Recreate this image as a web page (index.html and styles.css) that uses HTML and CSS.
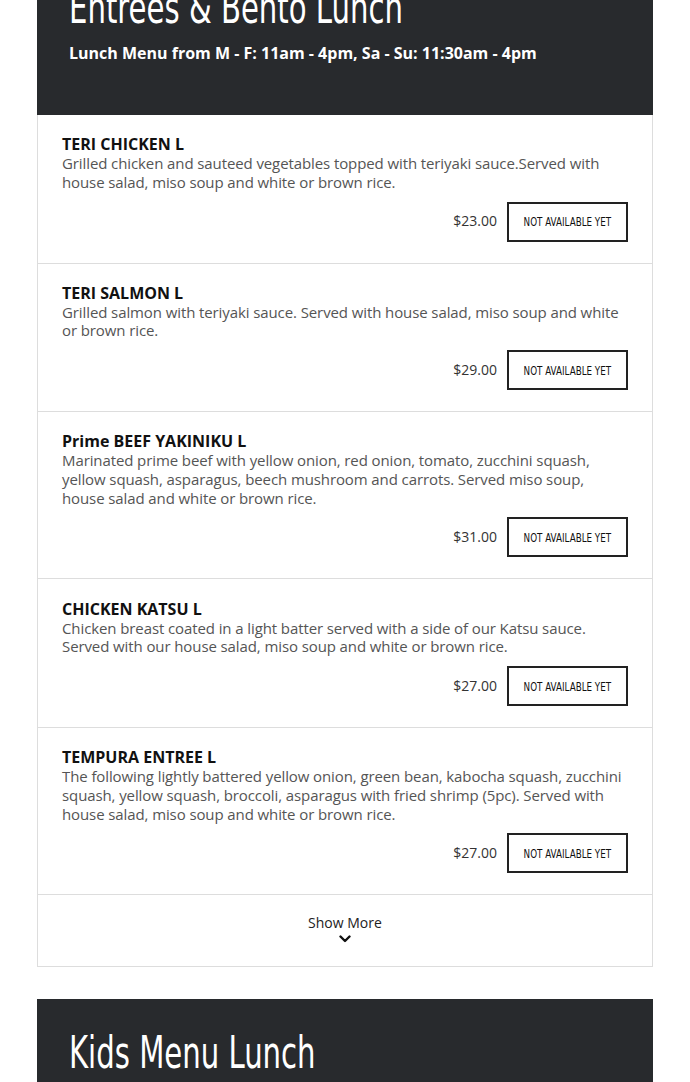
FILE: index.html
```html
<!DOCTYPE html>
<html>
<head>
<meta charset="utf-8">
<link rel="stylesheet" href="styles.css">
</head>
<body>
<div class="page">
  <section class="menu-section first">
    <header class="section-header">
      <h1 class="section-title"><span class="narrow">Entrees &amp; Bento Lunch</span></h1>
      <p class="section-sub">Lunch Menu from M - F: 11am - 4pm, Sa - Su: 11:30am - 4pm</p>
    </header>
    <div class="items">
      <div class="item">
        <h3 class="item-name">TERI CHICKEN L</h3>
        <p class="item-desc">Grilled chicken and sauteed vegetables topped with teriyaki sauce.Served with house salad, miso soup and white or brown rice.</p>
        <div class="item-foot"><span class="price">$23.00</span><span class="btn"><span class="btn-text">NOT AVAILABLE YET</span></span></div>
      </div>
      <div class="item">
        <h3 class="item-name">TERI SALMON L</h3>
        <p class="item-desc">Grilled salmon with teriyaki sauce. Served with house salad, miso soup and white or brown rice.</p>
        <div class="item-foot"><span class="price">$29.00</span><span class="btn"><span class="btn-text">NOT AVAILABLE YET</span></span></div>
      </div>
      <div class="item">
        <h3 class="item-name">Prime BEEF YAKINIKU L</h3>
        <p class="item-desc">Marinated prime beef with yellow onion, red onion, tomato, zucchini squash, yellow squash, asparagus, beech mushroom and carrots. Served miso soup, house salad and white or brown rice.</p>
        <div class="item-foot"><span class="price">$31.00</span><span class="btn"><span class="btn-text">NOT AVAILABLE YET</span></span></div>
      </div>
      <div class="item">
        <h3 class="item-name">CHICKEN KATSU L</h3>
        <p class="item-desc">Chicken breast coated in a light batter served with a side of our Katsu sauce. Served with our house salad, miso soup and white or brown rice.</p>
        <div class="item-foot"><span class="price">$27.00</span><span class="btn"><span class="btn-text">NOT AVAILABLE YET</span></span></div>
      </div>
      <div class="item">
        <h3 class="item-name">TEMPURA ENTREE L</h3>
        <p class="item-desc">The following lightly battered yellow onion, green bean, kabocha squash, zucchini squash, yellow squash, broccoli, asparagus with fried shrimp (5pc). Served with house salad, miso soup and white or brown rice.</p>
        <div class="item-foot"><span class="price">$27.00</span><span class="btn"><span class="btn-text">NOT AVAILABLE YET</span></span></div>
      </div>
      <div class="show-more">
        <span class="show-text">Show More</span>
        <svg class="chev" width="12" height="8" viewBox="0 0 12 8"><path d="M1.5 1.5 L6 6 L10.5 1.5" fill="none" stroke="#111" stroke-width="2.4" stroke-linecap="round" stroke-linejoin="round"/></svg>
      </div>
    </div>
  </section>
  <section class="menu-section">
    <header class="section-header">
      <h1 class="section-title"><span class="narrow">Kids Menu Lunch</span></h1>
    </header>
  </section>
</div>
</body>
</html>
```

FILE: styles.css
```css
* { box-sizing: border-box; }
html, body { margin: 0; padding: 0; background: #fff; }
body { font-family: "Open Sans", "Liberation Sans", sans-serif; color: #222; overflow: hidden; }
.page { width: 616px; margin: 0 auto; }
.menu-section.first { margin-top: -46px; }
.menu-section + .menu-section { margin-top: 32px; }
.section-header { background: #282a2d; color: #fff; padding: 26px 32px 51px; }
.section-title {
  margin: 0;
  font-family: "DejaVu Sans", sans-serif;
  font-stretch: condensed;
  font-weight: 400;
  font-size: 45px;
  line-height: 56px;
  white-space: nowrap;
}
.narrow { display: inline-block; transform: scaleX(0.72); transform-origin: left center; }
.section-sub { margin: 6px 0 0; font-weight: 700; font-size: 16px; line-height: 22px; }
.items { border: 1px solid #ddd; border-top: 0; }
.item { padding: 20.2px 24px 21px; border-bottom: 1px solid #ddd; }
.item-name { margin: 0; font-size: 16px; font-weight: 700; line-height: 19px; color: #111; }
.item-desc { margin: 0; font-size: 15px; line-height: 18.7px; color: #555; letter-spacing: -0.1px; }
.item-foot { display: flex; justify-content: flex-end; align-items: center; gap: 10px; margin-top: 10px; }
.price { font-size: 14px; color: #333; margin-top: -2px; }
.btn {
  display: flex; align-items: center; justify-content: center;
  width: 121px; height: 40px;
  border: 2px solid #222;
  color: #111;
  white-space: nowrap;
  overflow: hidden;
}
.btn-text {
  display: inline-block;
  font-family: "DejaVu Sans", sans-serif;
  font-stretch: condensed;
  font-size: 13px;
  transform: scaleX(0.75);
}
.show-more { display: flex; flex-direction: column; align-items: center; padding: 18px 0 23px; }
.show-text { font-size: 14px; line-height: 19px; color: #222; }
.chev { display: block; margin-top: 3px; }
```
